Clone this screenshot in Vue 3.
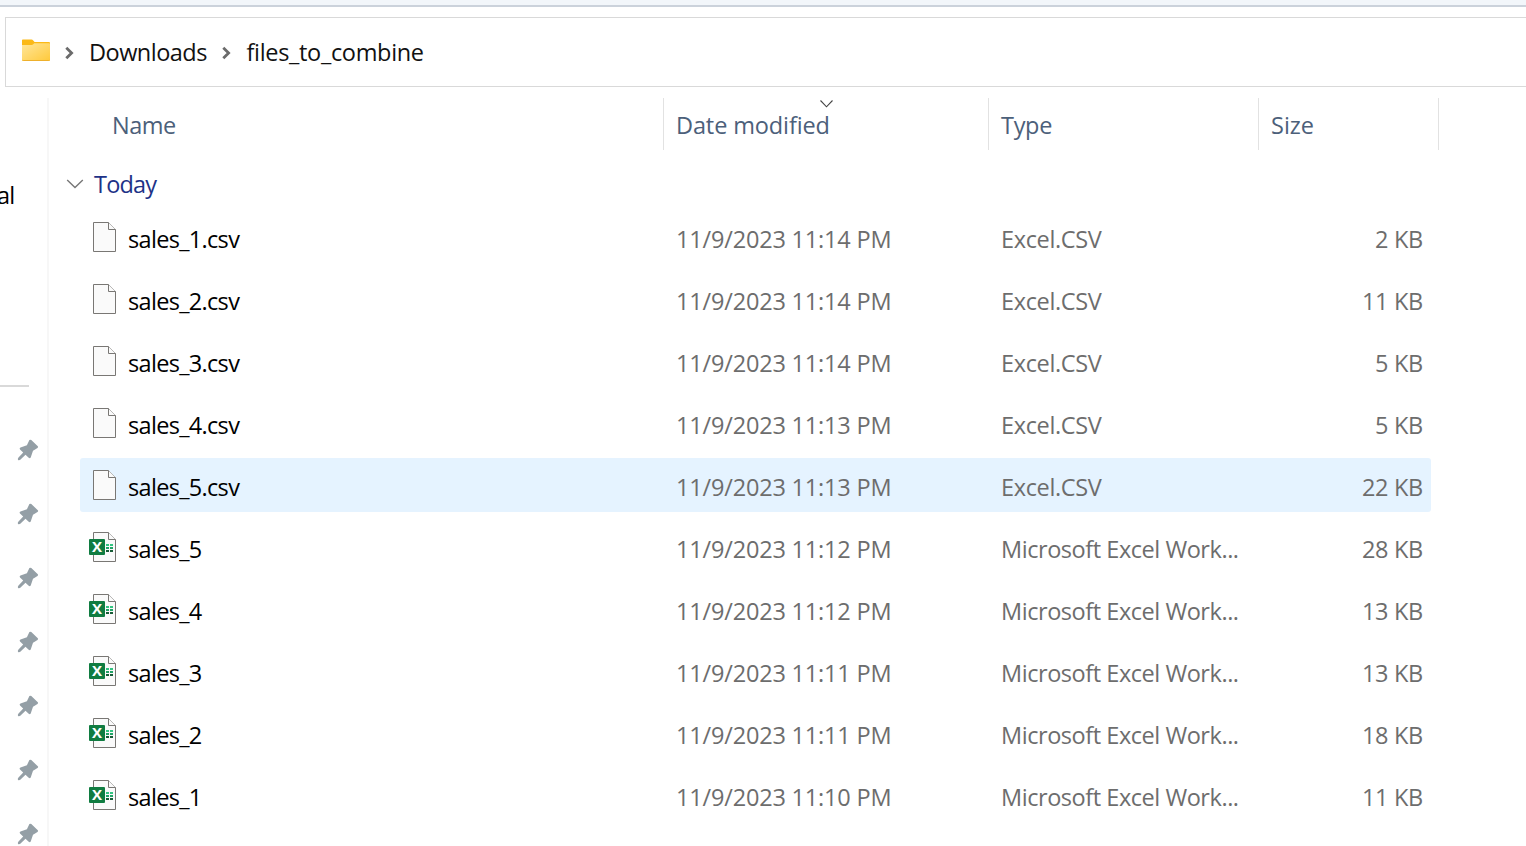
<script setup>
const csv = (n, time, size) => ({ name: `sales_${n}.csv`, time, size, type: 'Excel.CSV', kind: 'csv' })
const book = (n, time, size) => ({ name: `sales_${n}`, time, size, type: 'Microsoft Excel Work...', kind: 'xlsx' })
const files = [
  csv(1, '11:14', '2 KB'),
  csv(2, '11:14', '11 KB'),
  csv(3, '11:14', '5 KB'),
  csv(4, '11:13', '5 KB'),
  { ...csv(5, '11:13', '22 KB'), hover: true },
  book(5, '11:12', '28 KB'),
  book(4, '11:12', '13 KB'),
  book(3, '11:11', '13 KB'),
  book(2, '11:11', '18 KB'),
  book(1, '11:10', '11 KB'),
]
</script>

<template>
  <div class="window">
    <div class="strip"></div>
    <nav class="address">
      <svg class="folder" width="28" height="24" viewBox="0 0 28 24">
        <defs>
          <linearGradient id="folderFill" x1="0" y1="0" x2="1" y2="1">
            <stop offset="0" stop-color="#ffe69a" />
            <stop offset="1" stop-color="#ffc93a" />
          </linearGradient>
        </defs>
        <path d="M0 1.2Q0 .5 .8 .5H9.5Q10.5 .5 11.2 1.4L12.6 3H27Q28 3 28 4V10H0Z" fill="#fbb917" />
        <path d="M0 6H9.5Q10.5 6 11.3 5.2L12.2 4.3H27.2Q28 4.3 28 5V21Q28 22 27 22H1Q0 22 0 21Z" fill="url(#folderFill)" />
        <path d="M.3 21.2Q.6 21.5 1.2 21.5H26.8Q27.4 21.5 27.7 21.2" fill="none" stroke="#eeb02c" />
      </svg>
      <svg class="crumb-arrow" width="10" height="14" viewBox="0 0 10 14">
        <path d="M1.3 1.8L6.6 7L1.3 12.2" />
      </svg>
      <span class="crumb downloads">Downloads</span>
      <svg class="crumb-arrow" width="10" height="14" viewBox="0 0 10 14">
        <path d="M1.3 1.8L6.6 7L1.3 12.2" />
      </svg>
      <span class="crumb current">files_to_combine</span>
    </nav>

    <div class="body">
      <aside class="sidebar">
        <div class="side-label">al</div>
        <div class="side-rule"></div>
        <div class="pins">
          <svg v-for="n in 7" :key="n" width="22" height="22" viewBox="0 0 22 22">
            <path d="M12.4 1.1Q13.3.3 14.3 1.1L20.8 7.2Q21.6 8.1 20.5 8.9L16 11.7L13.8 18.2Q13.1 20 11.7 18.8L8.5 15.7L3.3 20.8Q2 21.7 1.1 20.9Q.4 20 1.3 18.8L6.2 13.6L3 10.5Q2 9.3 3.5 8.6L9.9 6.2Z" />
          </svg>
        </div>
      </aside>

      <main class="list">
        <header class="columns">
          <div class="col"><span class="h-name">Name</span></div>
          <div class="col">
            <span class="h-date">Date modified</span>
            <svg class="sort" width="14" height="9" viewBox="0 0 14 9"><path d="M.5 1.5L6.5 7.8L12.5 1.5" /></svg>
          </div>
          <div class="col"><span class="h-type">Type</span></div>
          <div class="col"><span class="h-size">Size</span></div>
        </header>

        <div class="group">
          <svg width="18" height="12" viewBox="0 0 18 12"><path d="M1.2 2L9 9.5L16.8 2" /></svg>
          <span>Today</span>
        </div>

        <div class="rows">
          <div v-for="f in files" :key="f.name" class="row" :class="[f.kind, { hover: f.hover }]">
            <svg class="icon" width="28" height="31" viewBox="0 0 28 31">
              <path d="M4.5.5H19.5L26.5 7.5V29.5H4.5Z" fill="#fafafa" stroke="#797774" />
              <path d="M19.5.5V7.5H26.5" fill="#fafafa" stroke="#797774" />
              <g v-if="f.kind === 'xlsx'">
                <rect x="0" y="7" width="16" height="16" rx="1" fill="#107c41" />
                <text x="8" y="20.3" text-anchor="middle">X</text>
                <path d="M17 13H20M21 13H24" stroke="#33c481" stroke-width="2" />
                <path d="M17 16H20M21 16H24" stroke="#21a366" stroke-width="2" />
                <path d="M17 19H20M21 19H24" stroke="#185c37" stroke-width="2" />
              </g>
            </svg>
            <span class="name">{{ f.name }}</span>
            <span class="date">11/9/2023 {{ f.time }} PM</span>
            <span class="type">{{ f.type }}</span>
            <span class="size">{{ f.size }}</span>
          </div>
        </div>
      </main>
    </div>
  </div>
</template>

<style>
body {
  background: #fff;
  overflow: hidden;
}
</style>

<style scoped>
.window {
  width: 1526px;
  height: 846px;
  overflow: hidden;
  display: flex;
  flex-direction: column;
  background: #fff;
  color: #000;
  font: 23.5px/32px "Open Sans", "Noto Sans", sans-serif;
  white-space: nowrap;
}
.window svg {
  flex: none;
}
.strip {
  flex: none;
  height: 5px;
  background: #f2f6fa;
  border-bottom: 2px solid #cbd2db;
}
.address {
  flex: none;
  box-sizing: border-box;
  height: 70px;
  margin: 10px 0 0 5px;
  border: 1px solid #d9d9d9;
  border-right: 0;
  padding-left: 16px;
  display: flex;
  align-items: center;
}
.folder {
  margin-top: -3px;
}
.crumb-arrow {
  margin: 2px 0 0 15px;
}
.crumb-arrow path {
  fill: none;
  stroke: #6b6b6b;
  stroke-width: 2.8;
}
.crumb {
  color: #111;
}
.downloads {
  width: 118px;
  margin-left: 14px;
  letter-spacing: -0.52px;
}
.current {
  margin-left: 14.5px;
  letter-spacing: -0.32px;
}
.body {
  flex: 1;
  min-height: 0;
  display: flex;
  padding-top: 11px;
}
.sidebar {
  flex: none;
  width: 47px;
  border-right: 2px solid #f7f7f7;
  padding-top: 81px;
  overflow: hidden;
}
.side-label {
  margin-left: -3px;
  letter-spacing: -0.8px;
}
.side-rule {
  width: 29px;
  height: 2px;
  margin-top: 174px;
  background: #d9d9d9;
}
.pins {
  display: flex;
  flex-direction: column;
  gap: 42px;
  padding: 52px 0 0 17px;
}
.pins path {
  fill: #949fa6;
}
.list {
  width: 1390px;
}
.columns {
  display: grid;
  grid-template-columns: 615px 325px 270px 180px;
  height: 52px;
  color: #4c607a;
}
.col {
  box-sizing: border-box;
  border-right: 1px solid #e2e2e2;
  padding: 11px 0 0 12px;
  position: relative;
}
.col:first-child {
  padding-left: 63px;
}
.h-name {
  letter-spacing: -0.5px;
}
.h-date {
  letter-spacing: -0.12px;
}
.h-type {
  letter-spacing: -0.3px;
}
.sort {
  position: absolute;
  left: 156px;
  top: 1px;
}
.sort path,
.group path {
  fill: none;
  stroke: #444;
  stroke-width: 1.1;
}
.group {
  display: flex;
  align-items: center;
  height: 32px;
  margin-top: 18px;
  padding-left: 17px;
  gap: 10px;
  color: #1e3287;
  letter-spacing: -0.8px;
}
.group path {
  stroke: #777;
  stroke-width: 1.4;
}
.rows {
  display: flex;
  flex-direction: column;
  gap: 8px;
  margin: 10px 0 0 31px;
}
.row {
  display: grid;
  grid-template-columns: 28px 559px 325px 225px 197px;
  width: 1351px;
  height: 54px;
  padding-left: 9px;
  box-sizing: border-box;
  border-radius: 3px;
  line-height: 58px;
  color: #6d6d6d;
}
.row.hover {
  background: #e5f3ff;
}
.icon {
  margin-top: 12px;
}
.icon text {
  fill: #fff;
  font: bold 15px "Open Sans", sans-serif;
  letter-spacing: 0;
}
.name {
  padding-left: 11px;
  color: #000;
  letter-spacing: -0.68px;
}
.date {
  letter-spacing: -0.18px;
}
.type {
  letter-spacing: -0.35px;
}
.xlsx .type {
  letter-spacing: -0.45px;
}
.size {
  text-align: right;
  letter-spacing: -0.3px;
}
</style>
